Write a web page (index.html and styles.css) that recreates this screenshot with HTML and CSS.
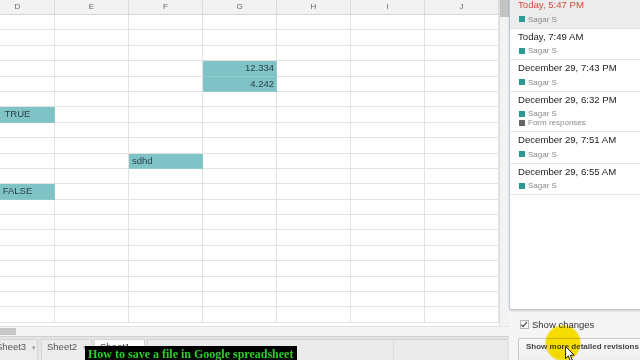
FILE: index.html
```html
<!DOCTYPE html>
<html>
<head>
<meta charset="utf-8">
<link rel="stylesheet" href="styles.css">
</head>
<body>
<div class="app">
  <div class="sheet">
    <div class="sheet-main">
      <div class="grid-wrap">
        <div class="grid-inner">
          <div class="col-headers">
            <div class="ch">D</div><div class="ch">E</div><div class="ch">F</div><div class="ch">G</div><div class="ch">H</div><div class="ch">I</div><div class="ch">J</div>
          </div>
          <div class="cells">
            <div class="c"></div><div class="c"></div><div class="c"></div><div class="c"></div><div class="c"></div><div class="c"></div><div class="c"></div>
            <div class="c"></div><div class="c"></div><div class="c"></div><div class="c"></div><div class="c"></div><div class="c"></div><div class="c"></div>
            <div class="c"></div><div class="c"></div><div class="c"></div><div class="c"></div><div class="c"></div><div class="c"></div><div class="c"></div>
            <div class="c"></div><div class="c"></div><div class="c"></div><div class="c hl num">12.334</div><div class="c"></div><div class="c"></div><div class="c"></div>
            <div class="c"></div><div class="c"></div><div class="c"></div><div class="c hl num">4.242</div><div class="c"></div><div class="c"></div><div class="c"></div>
            <div class="c"></div><div class="c"></div><div class="c"></div><div class="c"></div><div class="c"></div><div class="c"></div><div class="c"></div>
            <div class="c hl bool">TRUE</div><div class="c"></div><div class="c"></div><div class="c"></div><div class="c"></div><div class="c"></div><div class="c"></div>
            <div class="c"></div><div class="c"></div><div class="c"></div><div class="c"></div><div class="c"></div><div class="c"></div><div class="c"></div>
            <div class="c"></div><div class="c"></div><div class="c"></div><div class="c"></div><div class="c"></div><div class="c"></div><div class="c"></div>
            <div class="c"></div><div class="c"></div><div class="c hl txt">sdhd</div><div class="c"></div><div class="c"></div><div class="c"></div><div class="c"></div>
            <div class="c"></div><div class="c"></div><div class="c"></div><div class="c"></div><div class="c"></div><div class="c"></div><div class="c"></div>
            <div class="c hl bool">FALSE</div><div class="c"></div><div class="c"></div><div class="c"></div><div class="c"></div><div class="c"></div><div class="c"></div>
            <div class="c"></div><div class="c"></div><div class="c"></div><div class="c"></div><div class="c"></div><div class="c"></div><div class="c"></div>
            <div class="c"></div><div class="c"></div><div class="c"></div><div class="c"></div><div class="c"></div><div class="c"></div><div class="c"></div>
            <div class="c"></div><div class="c"></div><div class="c"></div><div class="c"></div><div class="c"></div><div class="c"></div><div class="c"></div>
            <div class="c"></div><div class="c"></div><div class="c"></div><div class="c"></div><div class="c"></div><div class="c"></div><div class="c"></div>
            <div class="c"></div><div class="c"></div><div class="c"></div><div class="c"></div><div class="c"></div><div class="c"></div><div class="c"></div>
            <div class="c"></div><div class="c"></div><div class="c"></div><div class="c"></div><div class="c"></div><div class="c"></div><div class="c"></div>
            <div class="c"></div><div class="c"></div><div class="c"></div><div class="c"></div><div class="c"></div><div class="c"></div><div class="c"></div>
            <div class="c"></div><div class="c"></div><div class="c"></div><div class="c"></div><div class="c"></div><div class="c"></div><div class="c"></div>
          </div>
        </div>
      </div>
      <div class="vscroll"><div class="vthumb"></div></div>
    </div>
    <div class="hscroll"><div class="hthumb"></div></div>
    <div class="tabbar">
      <div class="tab tab-first">Sheet3 <span class="arr">▾</span></div>
      <div class="tab">Sheet2 <span class="arr">▾</span></div>
      <div class="tab active">Sheet1 <span class="arr">▾</span></div>
      <div class="tab-rest"><div class="rest-a"></div><div class="rest-b"></div></div>
    </div>
  </div>
  <div class="panel">
    <div class="revlist">
      <div class="rev sel">
        <div class="date">Today, 5:47 PM</div>
        <div class="authors"><div class="who"><span class="sq"></span>Sagar S</div></div>
      </div>
      <div class="rev">
        <div class="date">Today, 7:49 AM</div>
        <div class="authors"><div class="who"><span class="sq"></span>Sagar S</div></div>
      </div>
      <div class="rev">
        <div class="date">December 29, 7:43 PM</div>
        <div class="authors"><div class="who"><span class="sq"></span>Sagar S</div></div>
      </div>
      <div class="rev">
        <div class="date">December 29, 6:32 PM</div>
        <div class="authors">
          <div class="who"><span class="sq"></span>Sagar S</div>
          <div class="who"><span class="sq sq-grey"></span>Form responses</div>
        </div>
      </div>
      <div class="rev">
        <div class="date">December 29, 7:51 AM</div>
        <div class="authors"><div class="who"><span class="sq"></span>Sagar S</div></div>
      </div>
      <div class="rev">
        <div class="date">December 29, 6:55 AM</div>
        <div class="authors"><div class="who"><span class="sq"></span>Sagar S</div></div>
      </div>
    </div>
    <div class="panel-foot">
      <label class="chk-row"><span class="chk"><svg width="9" height="9" viewBox="0 0 9 9"><path d="M1.5 4.8 L3.6 7 L7.8 1.5" fill="none" stroke="#444" stroke-width="1.3"/></svg></span>Show changes</label>
      <div class="btn">Show more detailed revisions</div>
    </div>
  </div>
  <div class="caption">How to save a file in Google spreadsheet</div>
  <div class="highlight"></div>
  <svg class="pointer" width="11" height="16" viewBox="0 0 11 16"><path d="M0.5 0.5 L0.5 12.5 L3.3 9.8 L5.3 14.8 L7.2 14 L5.3 9.2 L9.2 9.2 Z" fill="#fff" stroke="#222" stroke-width="1"/></svg>
</div>
</body>
</html>
```

FILE: styles.css
```css
* { box-sizing: border-box; }
html, body { margin: 0; padding: 0; }
body {
  width: 640px;
  height: 360px;
  overflow: hidden;
  background: #fff;
  font-family: "Liberation Sans", Arial, sans-serif;
}
.app {
  position: relative;
  display: flex;
  width: 640px;
  height: 360px;
  overflow: hidden;
}
.sheet {
  width: 509px;
  display: flex;
  flex-direction: column;
}
.sheet-main {
  height: 326px;
  display: flex;
}
.grid-wrap {
  width: 499px;
  overflow: hidden;
  background: #fff;
}
.grid-inner {
  width: 518px;
  margin-left: -19px;
}
.col-headers {
  display: grid;
  grid-template-columns: repeat(7, 74px);
  height: 15px;
  background: #f2f2f2;
  border-bottom: 1px solid #d6d6d6;
}
.ch {
  font-size: 8px;
  color: #666;
  text-align: center;
  line-height: 14px;
  border-right: 1px solid #dcdcdc;
}
.cells {
  display: grid;
  grid-template-columns: repeat(7, 74px);
  grid-auto-rows: 15.4px;
}
.c {
  border-right: 1px solid #e2e2e2;
  border-bottom: 1px solid #e2e2e2;
  font-size: 9.5px;
  line-height: 14px;
  color: #2a4448;
  white-space: nowrap;
  overflow: hidden;
}
.hl {
  background: #80c3c7;
  border-right-color: #8fcacd;
  border-bottom-color: #8fcacd;
}
.num { text-align: right; padding-right: 2px; }
.bool { text-align: center; }
.txt { padding-left: 3px; }
.vscroll {
  width: 10px;
  background: #f3f3f3;
  border-left: 1px solid #dedede;
}
.vthumb {
  height: 17px;
  background: #c3c3c3;
}
.hscroll {
  height: 10px;
  background: #f4f4f4;
  border-top: 1px solid #e2e2e2;
  padding-top: 1px;
}
.hthumb {
  width: 16px;
  height: 7px;
  background: #c8c8c8;
}
.tabbar {
  height: 24px;
  background: #e4e4e4;
  border-top: 1px solid #d2d2d2;
  padding-top: 2px;
  display: flex;
  align-items: stretch;
}
.tab {
  width: 51px;
  margin-right: 2px;
  background: #ececec;
  border: 1px solid #d6d6d6;
  border-bottom: none;
  font-size: 9.5px;
  color: #555;
  padding-left: 5px;
  line-height: 14px;
  white-space: nowrap;
}
.tab-first {
  width: 48px;
  margin-left: -10px;
  margin-right: 3px;
}
.tab.active {
  background: #fff;
  color: #444;
}
.arr {
  font-size: 7px;
  color: #999;
  margin-left: 3px;
}
.tab-rest {
  flex: 1;
  margin-right: 2px;
  display: flex;
  border-top: 1px solid #d0d0d0;
  border-left: 1px solid #d0d0d0;
  background: #ebebeb;
}
.rest-a { width: 246px; border-right: 1px solid #dadada; }
.rest-b { flex: 1; }
.panel {
  width: 131px;
  display: flex;
  flex-direction: column;
  background: #f5f5f5;
}
.revlist {
  height: 310px;
  flex: none;
  background: #fff;
  border-left: 1px solid #b9c8de;
  border-bottom: 1px solid #c9c9c9;
  border-bottom-left-radius: 3px;
  box-shadow: 0 1px 2px rgba(0,0,0,0.18);
  overflow: hidden;
}
.rev {
  padding: 1px 0 4px 8px;
  border-bottom: 1px solid #e4e4e4;
}
.rev.sel {
  margin-top: -3px;
  background: #ececec;
}
.date {
  font-size: 9.6px;
  line-height: 14px;
  color: #222;
  white-space: nowrap;
}
.sel .date { color: #d24a3a; }
.authors { margin-top: 2.5px; }
.who {
  font-size: 8px;
  line-height: 9px;
  color: #8a8a8a;
  display: flex;
  align-items: center;
  white-space: nowrap;
}
.sq {
  width: 6px;
  height: 6px;
  background: #2a9a93;
  margin: 0 3px 0 1px;
}
.sq-grey { background: #666; }
.panel-foot {
  flex: 1;
  padding: 8px 0 0 11px;
}
.chk-row {
  display: flex;
  align-items: center;
  height: 13px;
  font-size: 9.5px;
  color: #333;
}
.chk {
  width: 9px;
  height: 9px;
  background: #fff;
  border: 1px solid #b5b5b5;
  margin-right: 3px;
  display: flex;
}
.chk svg { margin: -1px 0 0 -1px; }
.btn {
  margin: 7px 0 0 -2px;
  height: 24px;
  width: 140px;
  border: 1px solid #c9c9c9;
  border-radius: 2px;
  background: linear-gradient(#f8f8f8, #efefef);
  font-size: 8px;
  font-weight: bold;
  color: #444;
  padding: 3px 0 0 7px;
  line-height: 10px;
  white-space: nowrap;
}
.caption {
  position: absolute;
  left: 85px;
  top: 346px;
  width: 212px;
  height: 16px;
  background: #000;
  color: #27d127;
  font-family: "Liberation Serif", "Times New Roman", serif;
  font-weight: bold;
  font-size: 12px;
  line-height: 16px;
  padding-left: 3px;
  white-space: nowrap;
}
.highlight {
  position: absolute;
  left: 545px;
  top: 325px;
  width: 36px;
  height: 36px;
  border-radius: 50%;
  background: radial-gradient(circle, #ffe600 62%, rgba(255,230,0,0.6) 70%, rgba(255,230,0,0) 72%);
  mix-blend-mode: multiply;
}
.pointer {
  position: absolute;
  left: 565px;
  top: 346px;
}
```
